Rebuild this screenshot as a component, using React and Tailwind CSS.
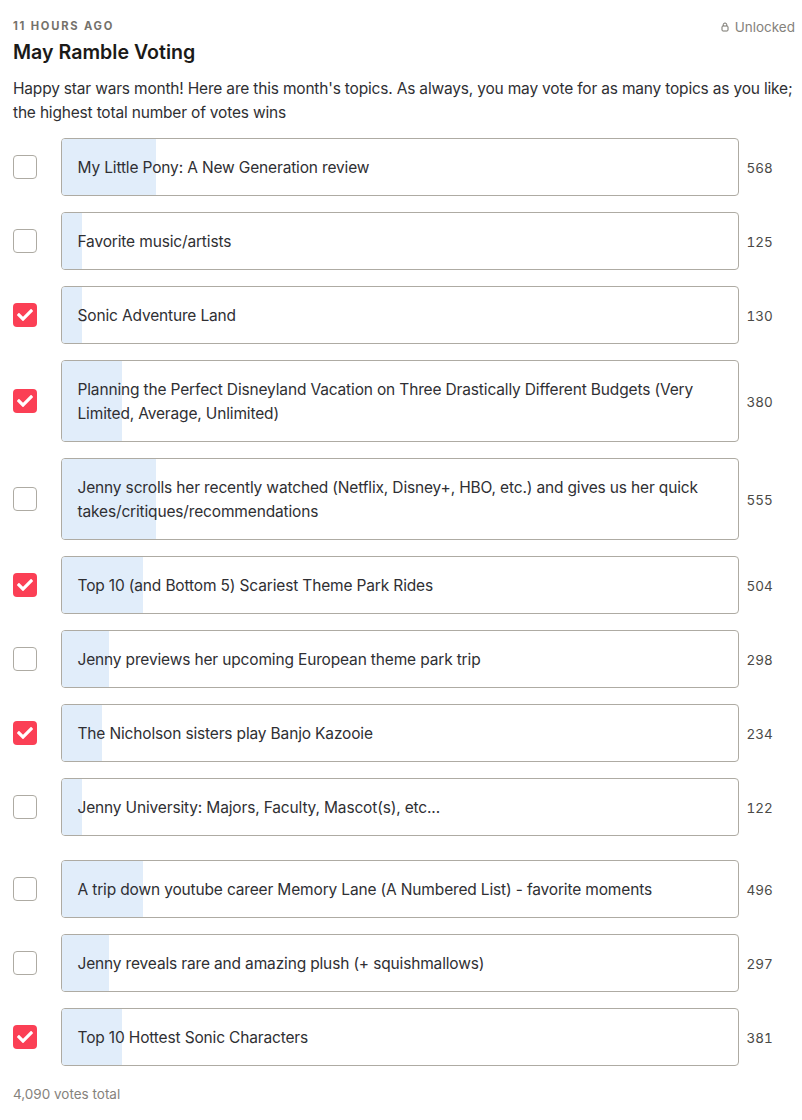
import { FaCheck } from "react-icons/fa";

const topics = [
  { text: "My Little Pony: A New Generation review", votes: 568, fill: 94 },
  { text: "Favorite music/artists", votes: 125, fill: 20 },
  { text: "Sonic Adventure Land", votes: 130, fill: 20, checked: true },
  { text: "Planning the Perfect Disneyland Vacation on Three Drastically Different Budgets (Very Limited, Average, Unlimited)", votes: 380, fill: 60, checked: true },
  { text: "Jenny scrolls her recently watched (Netflix, Disney+, HBO, etc.) and gives us her quick takes/critiques/recommendations", votes: 555, fill: 94 },
  { text: "Top 10 (and Bottom 5) Scariest Theme Park Rides", votes: 504, fill: 81, checked: true },
  { text: "Jenny previews her upcoming European theme park trip", votes: 298, fill: 47 },
  { text: "The Nicholson sisters play Banjo Kazooie", votes: 234, fill: 40, checked: true },
  { text: "Jenny University: Majors, Faculty, Mascot(s), etc...", votes: 122, fill: 20 },
  { text: "A trip down youtube career Memory Lane (A Numbered List) - favorite moments", votes: 496, fill: 81, spaced: true },
  { text: "Jenny reveals rare and amazing plush (+ squishmallows)", votes: 297, fill: 47 },
  { text: "Top 10 Hottest Sonic Characters", votes: 381, fill: 60, checked: true },
];

function Checkbox({ checked }) {
  if (checked) {
    return (
      <div className="w-6 h-6 shrink-0 rounded-[4px] bg-[#fb3f55] flex items-center justify-center text-white">
        <FaCheck size={16} />
      </div>
    );
  }
  return <div className="w-6 h-6 shrink-0 rounded-[4px] border border-[#aeaba3] bg-white" />;
}

function Topic({ topic, first }) {
  return (
    <div className={`flex items-center ${first ? "mt-[13px]" : topic.spaced ? "mt-6" : "mt-4"}`}>
      <Checkbox checked={topic.checked} />
      <div className="ml-6 w-[678px] shrink-0 flex rounded-[4px] border border-[#aeaba3] overflow-hidden relative">
        <div className="absolute left-0 top-0 bottom-0 bg-[#e1edfa]" style={{ width: topic.fill }} />
        <div className="relative pl-[15.5px] pr-4 pt-[17px] pb-[15px] text-[15.5px] tracking-[-0.01em] leading-6 text-[#2f2f33]">{topic.text}</div>
      </div>
      <div className="ml-[7.5px] text-[13.5px] leading-5 tabular-nums text-[#4b4a47] mt-0.5">{topic.votes}</div>
    </div>
  );
}

export default function App() {
  return (
    <div className="w-[802px] h-[1120px] bg-white px-[13px] pt-[18px] overflow-hidden font-['Inter',sans-serif]">
      <div className="flex justify-between items-start">
        <div className="text-[11.2px] leading-4 font-bold tracking-[0.16em] text-[#75726b]">11 HOURS AGO</div>
        <div className="flex items-center mr-[-6px] -mt-px text-[13.5px] leading-5 text-[#85827c]">
          <svg width="8" height="10" viewBox="0 0 8 10" fill="none" className="mr-[6px]">
            <rect x="1" y="4" width="6" height="5" rx="1" stroke="#75726b" strokeWidth="1" />
            <path d="M2.2 4 V2.8 a1.8 1.8 0 0 1 3.6 0 V4" stroke="#75726b" strokeWidth="1" />
          </svg>
          Unlocked
        </div>
      </div>
      <h1 className="mt-px text-[19.6px] leading-7 font-semibold text-[#1b1a18]">May Ramble Voting</h1>
      <p className="mt-[11px] w-[790px] text-[15.5px] tracking-[-0.012em] leading-6 text-[#2f2f33]">
        Happy star wars month! Here are this month's topics. As always, you may vote for as many topics as you like; the highest total number of votes wins
      </p>
      <div>
        {topics.map((t, i) => (
          <Topic key={t.text} topic={t} first={i === 0} />
        ))}
      </div>
      <div className="mt-[18px] text-[13.5px] leading-5 text-[#85827c]">4,090 votes total</div>
    </div>
  );
}
